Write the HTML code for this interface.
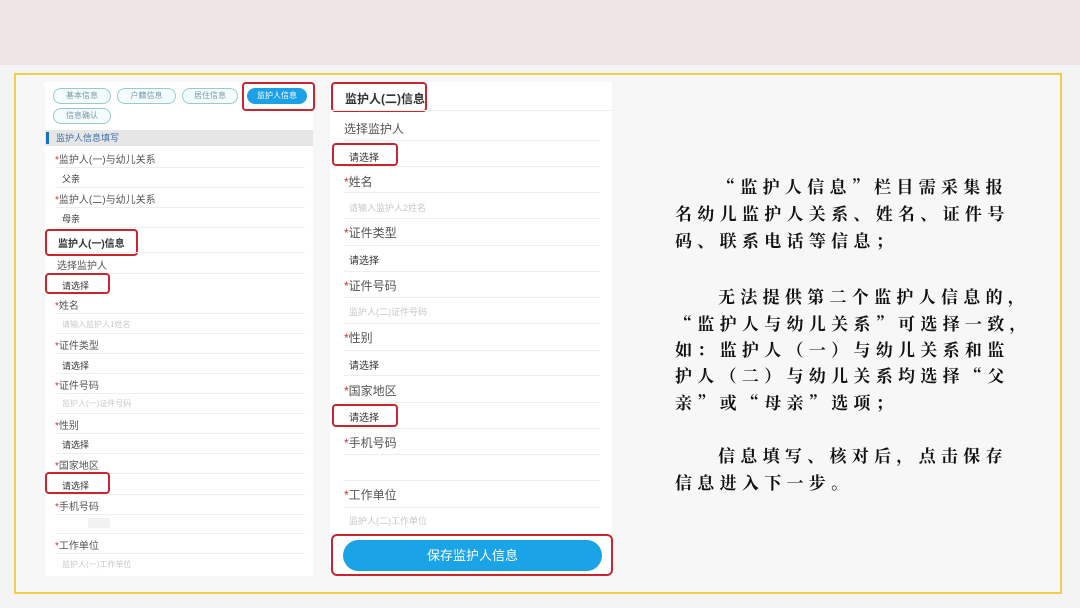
<!DOCTYPE html>
<html><head><meta charset="utf-8"><style>
*{margin:0;padding:0;box-sizing:border-box}
body{width:1080px;height:608px;overflow:hidden;background:#f4f4f5;position:relative;font-family:"Liberation Sans","Noto Sans CJK SC",sans-serif}
.a{position:absolute;white-space:nowrap}
.top{left:0;top:0;width:1080px;height:65px;background:#efe5e6}
.frame{left:14px;top:73px;width:1048px;height:521px;border:2px solid #f0cf4f;background:#f7f7f8}
.pan{background:#fff}
.l{font-size:10px;color:#555}
.r{font-size:12px;color:#555}
.s{color:#c33}
.ph{color:#c8c8c8}
.v{color:#333}
.ln{height:1px;background:#eee}
.rb{border:2px solid #c8262e;border-radius:4px}
.tab{height:16px;border:1px solid #9cc;border-radius:8px;font-size:8px;color:#79a;text-align:center;line-height:14px;background:#f3fbfb}
.t{font-family:"Noto Serif CJK SC","Liberation Serif",serif;font-weight:bold;font-size:17px;letter-spacing:5.3px;color:#111}
</style></head><body>
<div class="a top"></div>
<div class="a frame"></div>

<!-- left panel -->
<div class="a pan" style="left:45px;top:82px;width:268px;height:494px"></div>
<div class="a tab" style="left:53px;top:88px;width:58px">基本信息</div>
<div class="a tab" style="left:117px;top:88px;width:59px">户籍信息</div>
<div class="a tab" style="left:182px;top:88px;width:56px">居住信息</div>
<div class="a tab" style="left:247px;top:88px;width:60px;background:#1da1e6;border-color:#1da1e6;color:#fff">监护人信息</div>
<div class="a tab" style="left:53px;top:108px;width:58px">信息确认</div>
<div class="a rb" style="left:242px;top:82px;width:73px;height:29px"></div>
<div class="a" style="left:45px;top:130px;width:268px;height:16px;background:#e6e6e6"></div>
<div class="a" style="left:46px;top:132px;width:3px;height:12px;background:#1a6fc4"></div>
<div class="a" style="left:56px;top:131px;font-size:9px;color:#3a6ea8">监护人信息填写</div>

<div class="a l" style="left:55px;top:151px"><span class="s">*</span>监护人(一)与幼儿关系</div>
<div class="a ln" style="left:55px;top:167px;width:250px"></div>
<div class="a l v" style="left:62px;top:172px;font-size:9px">父亲</div>
<div class="a ln" style="left:55px;top:187px;width:250px"></div>
<div class="a l" style="left:55px;top:191px"><span class="s">*</span>监护人(二)与幼儿关系</div>
<div class="a ln" style="left:55px;top:207px;width:250px"></div>
<div class="a l v" style="left:62px;top:212px;font-size:9px">母亲</div>
<div class="a ln" style="left:55px;top:227px;width:250px"></div>
<div class="a l v" style="left:58px;top:235px;font-weight:bold">监护人(一)信息</div>
<div class="a rb" style="left:45px;top:229px;width:93px;height:27px"></div>
<div class="a ln" style="left:55px;top:252px;width:250px"></div>
<div class="a l" style="left:57px;top:257px">选择监护人</div>
<div class="a ln" style="left:55px;top:273px;width:250px"></div>
<div class="a l v" style="left:62px;top:279px;font-size:9px">请选择</div>
<div class="a rb" style="left:45px;top:273px;width:65px;height:21px"></div>
<div class="a l" style="left:55px;top:297px"><span class="s">*</span>姓名</div>
<div class="a ln" style="left:55px;top:313px;width:250px"></div>
<div class="a l ph" style="left:62px;top:319px;font-size:8px">请输入监护人1姓名</div>
<div class="a ln" style="left:55px;top:333px;width:250px"></div>
<div class="a l" style="left:55px;top:337px"><span class="s">*</span>证件类型</div>
<div class="a ln" style="left:55px;top:353px;width:250px"></div>
<div class="a l v" style="left:62px;top:359px;font-size:9px">请选择</div>
<div class="a ln" style="left:55px;top:373px;width:250px"></div>
<div class="a l" style="left:55px;top:377px"><span class="s">*</span>证件号码</div>
<div class="a ln" style="left:55px;top:393px;width:250px"></div>
<div class="a l ph" style="left:62px;top:398px;font-size:8px">监护人(一)证件号码</div>
<div class="a ln" style="left:55px;top:413px;width:250px"></div>
<div class="a l" style="left:55px;top:417px"><span class="s">*</span>性别</div>
<div class="a ln" style="left:55px;top:433px;width:250px"></div>
<div class="a l v" style="left:62px;top:438px;font-size:9px">请选择</div>
<div class="a ln" style="left:55px;top:453px;width:250px"></div>
<div class="a l" style="left:55px;top:457px"><span class="s">*</span>国家地区</div>
<div class="a ln" style="left:55px;top:473px;width:250px"></div>
<div class="a l v" style="left:62px;top:479px;font-size:9px">请选择</div>
<div class="a rb" style="left:45px;top:472px;width:65px;height:22px"></div>
<div class="a ln" style="left:55px;top:494px;width:250px"></div>
<div class="a l" style="left:55px;top:498px"><span class="s">*</span>手机号码</div>
<div class="a ln" style="left:55px;top:514px;width:250px"></div>
<div class="a" style="left:88px;top:518px;width:22px;height:10px;background:#f2f2f2"></div>
<div class="a ln" style="left:55px;top:533px;width:250px"></div>
<div class="a l" style="left:55px;top:537px"><span class="s">*</span>工作单位</div>
<div class="a ln" style="left:55px;top:553px;width:250px"></div>
<div class="a l ph" style="left:62px;top:559px;font-size:8px">监护人(一)工作单位</div>

<!-- right panel -->
<div class="a pan" style="left:330px;top:82px;width:282px;height:494px"></div>
<div class="a r v" style="left:345px;top:90px;font-weight:bold">监护人(二)信息</div>
<div class="a rb" style="left:331px;top:82px;width:96px;height:30px"></div>
<div class="a ln" style="left:331px;top:110px;width:281px"></div>
<div class="a r" style="left:344px;top:120px">选择监护人</div>
<div class="a ln" style="left:344px;top:140px;width:256px"></div>
<div class="a r v" style="left:349px;top:149px;font-size:10px">请选择</div>
<div class="a rb" style="left:332px;top:143px;width:66px;height:23px"></div>
<div class="a ln" style="left:344px;top:166px;width:256px"></div>
<div class="a r" style="left:344px;top:173px"><span class="s">*</span>姓名</div>
<div class="a ln" style="left:344px;top:192px;width:256px"></div>
<div class="a r ph" style="left:349px;top:201px;font-size:9px">请输入监护人2姓名</div>
<div class="a ln" style="left:344px;top:218px;width:256px"></div>
<div class="a r" style="left:344px;top:224px"><span class="s">*</span>证件类型</div>
<div class="a ln" style="left:344px;top:245px;width:256px"></div>
<div class="a r v" style="left:349px;top:252px;font-size:10px">请选择</div>
<div class="a ln" style="left:344px;top:271px;width:256px"></div>
<div class="a r" style="left:344px;top:277px"><span class="s">*</span>证件号码</div>
<div class="a ln" style="left:344px;top:297px;width:256px"></div>
<div class="a r ph" style="left:349px;top:305px;font-size:9px">监护人(二)证件号码</div>
<div class="a ln" style="left:344px;top:323px;width:256px"></div>
<div class="a r" style="left:344px;top:329px"><span class="s">*</span>性别</div>
<div class="a ln" style="left:344px;top:350px;width:256px"></div>
<div class="a r v" style="left:349px;top:357px;font-size:10px">请选择</div>
<div class="a ln" style="left:344px;top:375px;width:256px"></div>
<div class="a r" style="left:344px;top:382px"><span class="s">*</span>国家地区</div>
<div class="a ln" style="left:344px;top:402px;width:256px"></div>
<div class="a r v" style="left:349px;top:409px;font-size:10px">请选择</div>
<div class="a rb" style="left:332px;top:404px;width:66px;height:23px"></div>
<div class="a ln" style="left:344px;top:428px;width:256px"></div>
<div class="a r" style="left:344px;top:434px"><span class="s">*</span>手机号码</div>
<div class="a ln" style="left:344px;top:454px;width:256px"></div>
<div class="a ln" style="left:344px;top:480px;width:256px"></div>
<div class="a r" style="left:344px;top:486px"><span class="s">*</span>工作单位</div>
<div class="a ln" style="left:344px;top:507px;width:256px"></div>
<div class="a r ph" style="left:349px;top:514px;font-size:9px">监护人(二)工作单位</div>
<div class="a" style="left:343px;top:540px;width:259px;height:31px;border-radius:16px;background:#1ba3e8;color:#fff;font-size:13px;text-align:center;line-height:31px">保存监护人信息</div>
<div class="a rb" style="left:331px;top:534px;width:282px;height:42px;border-radius:6px"></div>

<!-- right text -->
<div class="a t" style="left:718px;top:173px">“监护人信息”栏目需采集报</div>
<div class="a t" style="left:675px;top:200px">名幼儿监护人关系、姓名、证件号</div>
<div class="a t" style="left:675px;top:227px">码、联系电话等信息；</div>
<div class="a t" style="left:718px;top:283px">无法提供第二个监护人信息的，</div>
<div class="a t" style="left:675px;top:310px">“监护人与幼儿关系”可选择一致，</div>
<div class="a t" style="left:675px;top:336px">如：监护人（一）与幼儿关系和监</div>
<div class="a t" style="left:675px;top:362px">护人（二）与幼儿关系均选择“父</div>
<div class="a t" style="left:675px;top:389px">亲”或“母亲”选项；</div>
<div class="a t" style="left:718px;top:442px">信息填写、核对后，点击保存</div>
<div class="a t" style="left:675px;top:469px">信息进入下一步。</div>
</body></html>
